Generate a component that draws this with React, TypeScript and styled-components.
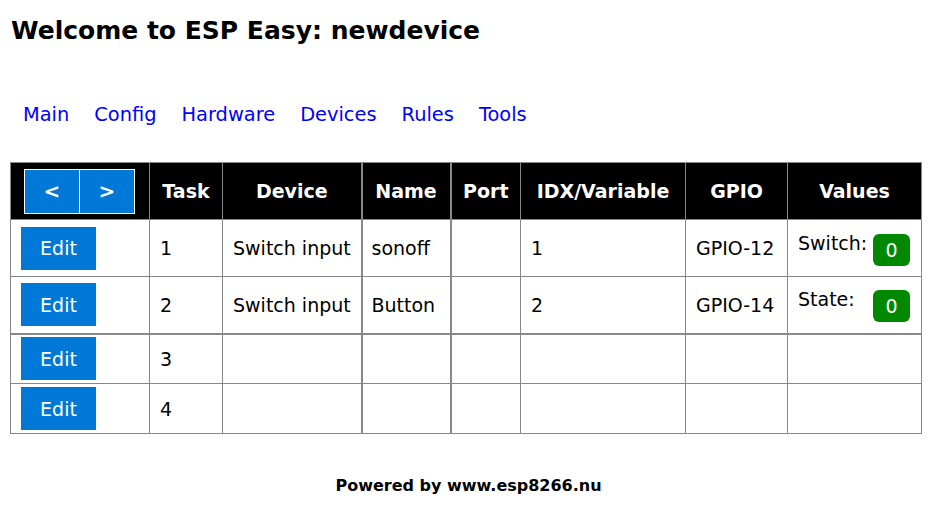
import * as React from 'react';
import styled, { createGlobalStyle } from 'styled-components';

const GlobalStyle = createGlobalStyle`
  html, body {
    margin: 0;
    padding: 0;
    background: #fff;
  }
  body {
    font-family: 'DejaVu Sans', 'Noto Sans', sans-serif;
    color: #000;
  }
`;

const Page = styled('div')`
  padding: 0 16px 0 10px;
  width: 911px;
`;

const Title = styled('h1')`
  margin: 0;
  padding: 15px 0 0 1px;
  font-size: 25px;
  font-weight: bold;
  line-height: 32px;
`;

const Nav = styled('nav')`
  display: flex;
  gap: 25px;
  margin: 55px 0 0;
  padding-left: 13px;
`;

const NavLink = styled('a')`
  font-size: 19.4px;
  color: #0000ff;
  text-decoration: none;
  line-height: 26px;
`;

const Table = styled('table')`
  margin-top: 34px;
  width: 911px;
  border-collapse: collapse;
  table-layout: fixed;
`;

const Col = styled('col')<{ $w: number }>`
  width: ${p => p.$w}px;
`;

const Th = styled('th')<{ $thick?: boolean }>`
  box-sizing: border-box;
  background: #000;
  color: #fff;
  font-size: 19px;
  font-weight: bold;
  height: 57px;
  padding: 0;
  border: 1px solid #888;
  border-left-width: ${p => (p.$thick ? 2 : 1)}px;
  text-align: center;
  white-space: nowrap;
`;

const Row = styled('tr')<{ $h: number; $thickBottom?: boolean }>`
  height: ${p => p.$h}px;
  border-bottom: ${p => (p.$thickBottom ? 2 : 1)}px solid #888;
`;

const Td = styled('td')<{ $thick?: boolean }>`
  box-sizing: border-box;
  font-size: 19px;
  padding: 0 10px 0 ${p => (p.$thick ? 9 : 10)}px;
  border: 1px solid #888;
  border-bottom: none;
  border-left-width: ${p => (p.$thick ? 2 : 1)}px;
  white-space: nowrap;
  vertical-align: middle;
`;

const Pager = styled('div')`
  display: flex;
  margin-left: 13px;
  border: 1px solid #fff;
  width: 109px;
`;

const PageBtn = styled('div')`
  flex: 1;
  height: 43px;
  background: #0078d7;
  color: #fff;
  display: flex;
  align-items: center;
  justify-content: center;
  font-size: 20px;
  font-weight: bold;
  & + & {
    border-left: 1px solid #fff;
  }
`;

const EditButton = styled('a')`
  display: flex;
  align-items: center;
  justify-content: center;
  width: 75px;
  height: 43px;
  background: #0078d7;
  color: #fff;
  font-size: 19px;
  text-decoration: none;
`;

const ValueLine = styled('div')`
  display: flex;
  justify-content: space-between;
  align-items: flex-start;
`;

const ValueLabel = styled('span')`
  line-height: 24px;
`;

const Badge = styled('span')`
  display: inline-flex;
  align-items: center;
  justify-content: center;
  width: 37px;
  height: 32px;
  margin-top: 3px;
  margin-right: 1px;
  border-radius: 6px;
  background: #008800;
  color: #fff;
  font-size: 19px;
`;

const Footer = styled('footer')`
  margin-top: 42px;
  text-align: center;
  font-size: 16px;
  font-weight: bold;
  padding-left: 6px;
`;

const columns = [
  { key: 'nav', w: 139 },
  { key: 'Task', w: 73 },
  { key: 'Device', w: 139 },
  { key: 'Name', w: 89, thick: true },
  { key: 'Port', w: 70, thick: true },
  { key: 'IDX/Variable', w: 165 },
  { key: 'GPIO', w: 102 },
  { key: 'Values', w: 134 },
];

const tasks = [
  { n: 1, device: 'Switch input', name: 'sonoff', idx: '1', gpio: 'GPIO-12', label: 'Switch:', value: '0', h: 57 },
  { n: 2, device: 'Switch input', name: 'Button', idx: '2', gpio: 'GPIO-14', label: 'State:', value: '0', h: 57, thickBottom: true },
  { n: 3, h: 50 },
  { n: 4, h: 50 },
] as Array<{
  n: number;
  device?: string;
  name?: string;
  idx?: string;
  gpio?: string;
  label?: string;
  value?: string;
  h: number;
  thickBottom?: boolean;
}>;

const navItems = ['Main', 'Config', 'Hardware', 'Devices', 'Rules', 'Tools'];

const App = () => {
  return (
    <Page>
      <GlobalStyle />
      <Title>Welcome to ESP Easy: newdevice</Title>
      <Nav>
        {navItems.map(item => (
          <NavLink key={item} href="#">
            {item}
          </NavLink>
        ))}
      </Nav>
      <Table>
        <colgroup>
          {columns.map(col => (
            <Col key={col.key} $w={col.w} />
          ))}
        </colgroup>
        <thead>
          <tr>
            {columns.map(col => (
              <Th key={col.key} $thick={col.thick}>
                {col.key === 'nav' ? (
                  <Pager>
                    <PageBtn>&lt;</PageBtn>
                    <PageBtn>&gt;</PageBtn>
                  </Pager>
                ) : (
                  col.key
                )}
              </Th>
            ))}
          </tr>
        </thead>
        <tbody>
          {tasks.map(task => (
            <Row key={task.n} $h={task.h} $thickBottom={task.thickBottom}>
              <Td>
                <EditButton href="#">Edit</EditButton>
              </Td>
              <Td>{task.n}</Td>
              <Td>{task.device}</Td>
              <Td $thick>{task.name}</Td>
              <Td $thick></Td>
              <Td>{task.idx}</Td>
              <Td>{task.gpio}</Td>
              <Td>
                {task.label && (
                  <ValueLine>
                    <ValueLabel>{task.label}</ValueLabel>
                    <Badge>{task.value}</Badge>
                  </ValueLine>
                )}
              </Td>
            </Row>
          ))}
        </tbody>
      </Table>
      <Footer>Powered by www.esp8266.nu</Footer>
    </Page>
  );
};

export default App;
